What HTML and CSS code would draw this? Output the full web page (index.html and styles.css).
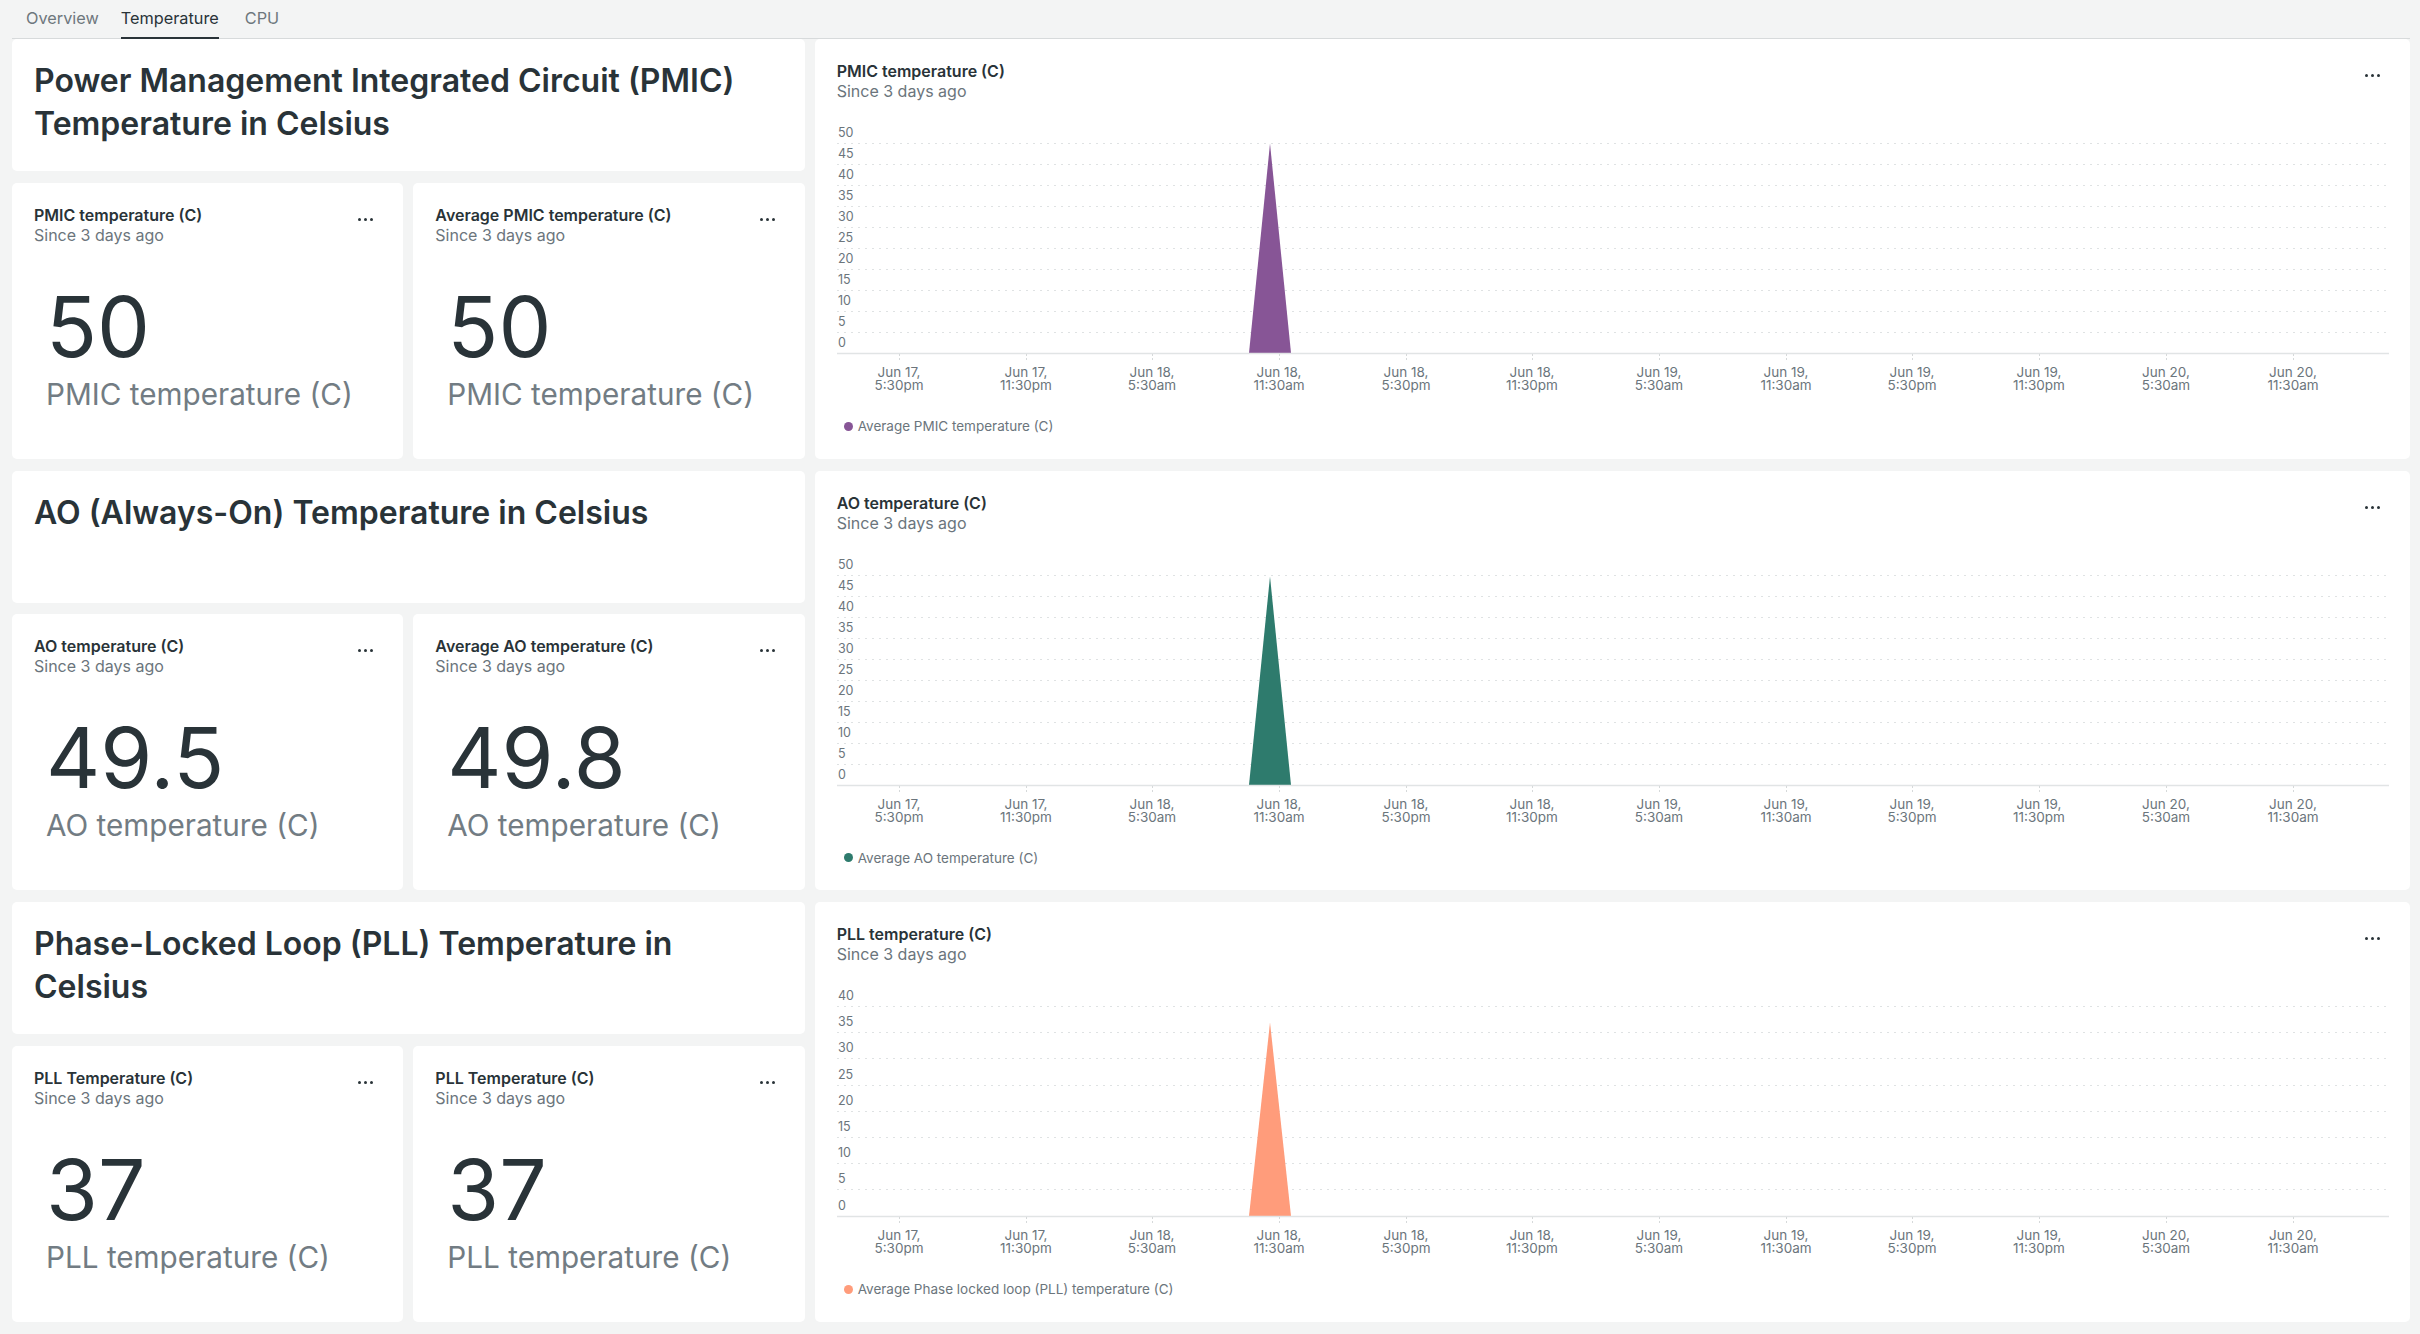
FILE: index.html
```html
<!DOCTYPE html>
<html lang="en">
<head>
<meta charset="utf-8">
<title>Temperature</title>
<link rel="stylesheet" href="styles.css">
</head>
<body>
<nav class="tabs">
  <span class="tab">Overview</span>
  <span class="tab active">Temperature</span>
  <span class="tab">CPU</span>
</nav>

<main class="board">
  <!-- Section 1: PMIC -->
  <section class="card title-card"><h2>Power Management Integrated Circuit (PMIC) Temperature in Celsius</h2></section>
  <section class="card chart">
    <div class="head">
      <div><div class="head-title">PMIC temperature (C)</div><div class="head-sub">Since 3 days ago</div></div>
      <svg class="more" width="15" height="3" viewBox="0 0 15 3"><circle cx="1.5" cy="1.5" r="1.5"/><circle cx="7.5" cy="1.5" r="1.5"/><circle cx="13.5" cy="1.5" r="1.5"/></svg>
    </div>
    <svg class="plot" width="1552" height="285" viewBox="0 0 1552 285">
      <g class="grid">
        <line x1="0" x2="1552" y1="28.5" y2="28.5"/><line x1="0" x2="1552" y1="49.5" y2="49.5"/><line x1="0" x2="1552" y1="70.5" y2="70.5"/><line x1="0" x2="1552" y1="91.5" y2="91.5"/><line x1="0" x2="1552" y1="112.5" y2="112.5"/><line x1="0" x2="1552" y1="133.5" y2="133.5"/><line x1="0" x2="1552" y1="154.5" y2="154.5"/><line x1="0" x2="1552" y1="175.5" y2="175.5"/><line x1="0" x2="1552" y1="196.5" y2="196.5"/><line x1="0" x2="1552" y1="217.5" y2="217.5"/>
      </g>
      <polygon class="area purple" points="412,238 433,28.5 454,238"/>
      <line class="axis" x1="0" x2="1552" y1="238.5" y2="238.5"/>
      <g class="ticks">
        <line x1="62.5" x2="62.5" y1="239" y2="247"/><line x1="189.5" x2="189.5" y1="239" y2="247"/><line x1="315.5" x2="315.5" y1="239" y2="247"/><line x1="442.5" x2="442.5" y1="239" y2="247"/><line x1="569.5" x2="569.5" y1="239" y2="247"/><line x1="695.5" x2="695.5" y1="239" y2="247"/><line x1="822.5" x2="822.5" y1="239" y2="247"/><line x1="949.5" x2="949.5" y1="239" y2="247"/><line x1="1075.5" x2="1075.5" y1="239" y2="247"/><line x1="1202.5" x2="1202.5" y1="239" y2="247"/><line x1="1329.5" x2="1329.5" y1="239" y2="247"/><line x1="1456.5" x2="1456.5" y1="239" y2="247"/>
      </g>
      <g class="ylab">
        <text x="1" y="22">50</text><text x="1" y="43">45</text><text x="1" y="64">40</text><text x="1" y="85">35</text><text x="1" y="106">30</text><text x="1" y="127">25</text><text x="1" y="148">20</text><text x="1" y="169">15</text><text x="1" y="190">10</text><text x="1" y="211">5</text><text x="1" y="232">0</text>
      </g>
      <g class="xlab">
        <text><tspan x="62" y="262">Jun 17,</tspan><tspan x="62" y="275">5:30pm</tspan></text>
        <text><tspan x="189" y="262">Jun 17,</tspan><tspan x="189" y="275">11:30pm</tspan></text>
        <text><tspan x="315" y="262">Jun 18,</tspan><tspan x="315" y="275">5:30am</tspan></text>
        <text><tspan x="442" y="262">Jun 18,</tspan><tspan x="442" y="275">11:30am</tspan></text>
        <text><tspan x="569" y="262">Jun 18,</tspan><tspan x="569" y="275">5:30pm</tspan></text>
        <text><tspan x="695" y="262">Jun 18,</tspan><tspan x="695" y="275">11:30pm</tspan></text>
        <text><tspan x="822" y="262">Jun 19,</tspan><tspan x="822" y="275">5:30am</tspan></text>
        <text><tspan x="949" y="262">Jun 19,</tspan><tspan x="949" y="275">11:30am</tspan></text>
        <text><tspan x="1075" y="262">Jun 19,</tspan><tspan x="1075" y="275">5:30pm</tspan></text>
        <text><tspan x="1202" y="262">Jun 19,</tspan><tspan x="1202" y="275">11:30pm</tspan></text>
        <text><tspan x="1329" y="262">Jun 20,</tspan><tspan x="1329" y="275">5:30am</tspan></text>
        <text><tspan x="1456" y="262">Jun 20,</tspan><tspan x="1456" y="275">11:30am</tspan></text>
      </g>
    </svg>
    <div class="legend"><span class="dot purple-bg"></span>Average PMIC temperature (C)</div>
  </section>
  <section class="card billboard">
    <div class="head">
      <div><div class="head-title">PMIC temperature (C)</div><div class="head-sub">Since 3 days ago</div></div>
      <svg class="more" width="15" height="3" viewBox="0 0 15 3"><circle cx="1.5" cy="1.5" r="1.5"/><circle cx="7.5" cy="1.5" r="1.5"/><circle cx="13.5" cy="1.5" r="1.5"/></svg>
    </div>
    <div class="value"><div class="num">50</div><div class="unit">PMIC temperature (C)</div></div>
  </section>
  <section class="card billboard">
    <div class="head">
      <div><div class="head-title">Average PMIC temperature (C)</div><div class="head-sub">Since 3 days ago</div></div>
      <svg class="more" width="15" height="3" viewBox="0 0 15 3"><circle cx="1.5" cy="1.5" r="1.5"/><circle cx="7.5" cy="1.5" r="1.5"/><circle cx="13.5" cy="1.5" r="1.5"/></svg>
    </div>
    <div class="value"><div class="num">50</div><div class="unit">PMIC temperature (C)</div></div>
  </section>

  <!-- Section 2: AO -->
  <section class="card title-card"><h2>AO (Always-On) Temperature in Celsius</h2></section>
  <section class="card chart">
    <div class="head">
      <div><div class="head-title">AO temperature (C)</div><div class="head-sub">Since 3 days ago</div></div>
      <svg class="more" width="15" height="3" viewBox="0 0 15 3"><circle cx="1.5" cy="1.5" r="1.5"/><circle cx="7.5" cy="1.5" r="1.5"/><circle cx="13.5" cy="1.5" r="1.5"/></svg>
    </div>
    <svg class="plot" width="1552" height="285" viewBox="0 0 1552 285">
      <g class="grid">
        <line x1="0" x2="1552" y1="28.5" y2="28.5"/><line x1="0" x2="1552" y1="49.5" y2="49.5"/><line x1="0" x2="1552" y1="70.5" y2="70.5"/><line x1="0" x2="1552" y1="91.5" y2="91.5"/><line x1="0" x2="1552" y1="112.5" y2="112.5"/><line x1="0" x2="1552" y1="133.5" y2="133.5"/><line x1="0" x2="1552" y1="154.5" y2="154.5"/><line x1="0" x2="1552" y1="175.5" y2="175.5"/><line x1="0" x2="1552" y1="196.5" y2="196.5"/><line x1="0" x2="1552" y1="217.5" y2="217.5"/>
      </g>
      <polygon class="area teal" points="412,238 433,29.5 454,238"/>
      <line class="axis" x1="0" x2="1552" y1="238.5" y2="238.5"/>
      <g class="ticks">
        <line x1="62.5" x2="62.5" y1="239" y2="247"/><line x1="189.5" x2="189.5" y1="239" y2="247"/><line x1="315.5" x2="315.5" y1="239" y2="247"/><line x1="442.5" x2="442.5" y1="239" y2="247"/><line x1="569.5" x2="569.5" y1="239" y2="247"/><line x1="695.5" x2="695.5" y1="239" y2="247"/><line x1="822.5" x2="822.5" y1="239" y2="247"/><line x1="949.5" x2="949.5" y1="239" y2="247"/><line x1="1075.5" x2="1075.5" y1="239" y2="247"/><line x1="1202.5" x2="1202.5" y1="239" y2="247"/><line x1="1329.5" x2="1329.5" y1="239" y2="247"/><line x1="1456.5" x2="1456.5" y1="239" y2="247"/>
      </g>
      <g class="ylab">
        <text x="1" y="22">50</text><text x="1" y="43">45</text><text x="1" y="64">40</text><text x="1" y="85">35</text><text x="1" y="106">30</text><text x="1" y="127">25</text><text x="1" y="148">20</text><text x="1" y="169">15</text><text x="1" y="190">10</text><text x="1" y="211">5</text><text x="1" y="232">0</text>
      </g>
      <g class="xlab">
        <text><tspan x="62" y="262">Jun 17,</tspan><tspan x="62" y="275">5:30pm</tspan></text>
        <text><tspan x="189" y="262">Jun 17,</tspan><tspan x="189" y="275">11:30pm</tspan></text>
        <text><tspan x="315" y="262">Jun 18,</tspan><tspan x="315" y="275">5:30am</tspan></text>
        <text><tspan x="442" y="262">Jun 18,</tspan><tspan x="442" y="275">11:30am</tspan></text>
        <text><tspan x="569" y="262">Jun 18,</tspan><tspan x="569" y="275">5:30pm</tspan></text>
        <text><tspan x="695" y="262">Jun 18,</tspan><tspan x="695" y="275">11:30pm</tspan></text>
        <text><tspan x="822" y="262">Jun 19,</tspan><tspan x="822" y="275">5:30am</tspan></text>
        <text><tspan x="949" y="262">Jun 19,</tspan><tspan x="949" y="275">11:30am</tspan></text>
        <text><tspan x="1075" y="262">Jun 19,</tspan><tspan x="1075" y="275">5:30pm</tspan></text>
        <text><tspan x="1202" y="262">Jun 19,</tspan><tspan x="1202" y="275">11:30pm</tspan></text>
        <text><tspan x="1329" y="262">Jun 20,</tspan><tspan x="1329" y="275">5:30am</tspan></text>
        <text><tspan x="1456" y="262">Jun 20,</tspan><tspan x="1456" y="275">11:30am</tspan></text>
      </g>
    </svg>
    <div class="legend"><span class="dot teal-bg"></span>Average AO temperature (C)</div>
  </section>
  <section class="card billboard">
    <div class="head">
      <div><div class="head-title">AO temperature (C)</div><div class="head-sub">Since 3 days ago</div></div>
      <svg class="more" width="15" height="3" viewBox="0 0 15 3"><circle cx="1.5" cy="1.5" r="1.5"/><circle cx="7.5" cy="1.5" r="1.5"/><circle cx="13.5" cy="1.5" r="1.5"/></svg>
    </div>
    <div class="value"><div class="num">49.5</div><div class="unit">AO temperature (C)</div></div>
  </section>
  <section class="card billboard">
    <div class="head">
      <div><div class="head-title">Average AO temperature (C)</div><div class="head-sub">Since 3 days ago</div></div>
      <svg class="more" width="15" height="3" viewBox="0 0 15 3"><circle cx="1.5" cy="1.5" r="1.5"/><circle cx="7.5" cy="1.5" r="1.5"/><circle cx="13.5" cy="1.5" r="1.5"/></svg>
    </div>
    <div class="value"><div class="num">49.8</div><div class="unit">AO temperature (C)</div></div>
  </section>

  <!-- Section 3: PLL -->
  <section class="card title-card"><h2>Phase-Locked Loop (PLL) Temperature in Celsius</h2></section>
  <section class="card chart">
    <div class="head">
      <div><div class="head-title">PLL temperature (C)</div><div class="head-sub">Since 3 days ago</div></div>
      <svg class="more" width="15" height="3" viewBox="0 0 15 3"><circle cx="1.5" cy="1.5" r="1.5"/><circle cx="7.5" cy="1.5" r="1.5"/><circle cx="13.5" cy="1.5" r="1.5"/></svg>
    </div>
    <svg class="plot" width="1552" height="285" viewBox="0 0 1552 285">
      <g class="grid">
        <line x1="0" x2="1552" y1="28.5" y2="28.5"/><line x1="0" x2="1552" y1="54.5" y2="54.5"/><line x1="0" x2="1552" y1="80.5" y2="80.5"/><line x1="0" x2="1552" y1="107.5" y2="107.5"/><line x1="0" x2="1552" y1="133.5" y2="133.5"/><line x1="0" x2="1552" y1="159.5" y2="159.5"/><line x1="0" x2="1552" y1="185.5" y2="185.5"/><line x1="0" x2="1552" y1="211.5" y2="211.5"/>
      </g>
      <polygon class="area salmon" points="412,238 433,44.5 454,238"/>
      <line class="axis" x1="0" x2="1552" y1="238.5" y2="238.5"/>
      <g class="ticks">
        <line x1="62.5" x2="62.5" y1="239" y2="247"/><line x1="189.5" x2="189.5" y1="239" y2="247"/><line x1="315.5" x2="315.5" y1="239" y2="247"/><line x1="442.5" x2="442.5" y1="239" y2="247"/><line x1="569.5" x2="569.5" y1="239" y2="247"/><line x1="695.5" x2="695.5" y1="239" y2="247"/><line x1="822.5" x2="822.5" y1="239" y2="247"/><line x1="949.5" x2="949.5" y1="239" y2="247"/><line x1="1075.5" x2="1075.5" y1="239" y2="247"/><line x1="1202.5" x2="1202.5" y1="239" y2="247"/><line x1="1329.5" x2="1329.5" y1="239" y2="247"/><line x1="1456.5" x2="1456.5" y1="239" y2="247"/>
      </g>
      <g class="ylab">
        <text x="1" y="22">40</text><text x="1" y="48">35</text><text x="1" y="74">30</text><text x="1" y="101">25</text><text x="1" y="127">20</text><text x="1" y="153">15</text><text x="1" y="179">10</text><text x="1" y="205">5</text><text x="1" y="232">0</text>
      </g>
      <g class="xlab">
        <text><tspan x="62" y="262">Jun 17,</tspan><tspan x="62" y="275">5:30pm</tspan></text>
        <text><tspan x="189" y="262">Jun 17,</tspan><tspan x="189" y="275">11:30pm</tspan></text>
        <text><tspan x="315" y="262">Jun 18,</tspan><tspan x="315" y="275">5:30am</tspan></text>
        <text><tspan x="442" y="262">Jun 18,</tspan><tspan x="442" y="275">11:30am</tspan></text>
        <text><tspan x="569" y="262">Jun 18,</tspan><tspan x="569" y="275">5:30pm</tspan></text>
        <text><tspan x="695" y="262">Jun 18,</tspan><tspan x="695" y="275">11:30pm</tspan></text>
        <text><tspan x="822" y="262">Jun 19,</tspan><tspan x="822" y="275">5:30am</tspan></text>
        <text><tspan x="949" y="262">Jun 19,</tspan><tspan x="949" y="275">11:30am</tspan></text>
        <text><tspan x="1075" y="262">Jun 19,</tspan><tspan x="1075" y="275">5:30pm</tspan></text>
        <text><tspan x="1202" y="262">Jun 19,</tspan><tspan x="1202" y="275">11:30pm</tspan></text>
        <text><tspan x="1329" y="262">Jun 20,</tspan><tspan x="1329" y="275">5:30am</tspan></text>
        <text><tspan x="1456" y="262">Jun 20,</tspan><tspan x="1456" y="275">11:30am</tspan></text>
      </g>
    </svg>
    <div class="legend"><span class="dot salmon-bg"></span>Average Phase locked loop (PLL) temperature (C)</div>
  </section>
  <section class="card billboard">
    <div class="head">
      <div><div class="head-title">PLL Temperature (C)</div><div class="head-sub">Since 3 days ago</div></div>
      <svg class="more" width="15" height="3" viewBox="0 0 15 3"><circle cx="1.5" cy="1.5" r="1.5"/><circle cx="7.5" cy="1.5" r="1.5"/><circle cx="13.5" cy="1.5" r="1.5"/></svg>
    </div>
    <div class="value"><div class="num">37</div><div class="unit">PLL temperature (C)</div></div>
  </section>
  <section class="card billboard">
    <div class="head">
      <div><div class="head-title">PLL Temperature (C)</div><div class="head-sub">Since 3 days ago</div></div>
      <svg class="more" width="15" height="3" viewBox="0 0 15 3"><circle cx="1.5" cy="1.5" r="1.5"/><circle cx="7.5" cy="1.5" r="1.5"/><circle cx="13.5" cy="1.5" r="1.5"/></svg>
    </div>
    <div class="value"><div class="num">37</div><div class="unit">PLL temperature (C)</div></div>
  </section>
</main>
</body>
</html>
```

FILE: styles.css
```css
* { box-sizing: border-box; }
html, body { margin: 0; padding: 0; }
body {
  background: #f3f4f4;
  font-family: Inter, "Noto Sans", "Liberation Sans", sans-serif;
  color: #293338;
  width: 2420px;
  height: 1334px;
  overflow: hidden;
}

/* Tabs */
.tabs {
  display: flex;
  margin: 0 10px 0 12px;
  padding-left: 14px;
  height: 39px;
  border-bottom: 1px solid #d7dadb;
}
.tab {
  font-size: 16.3px;
  line-height: 20px;
  padding-top: 8px;
  height: 39px;
  color: #6e777d;
}
.tab + .tab { margin-left: 22px; }
.tab.active + .tab { margin-left: 26px; }
.tab.active {
  color: #293338;
  border-bottom: 2px solid #293338;
}

/* Board grid */
.board {
  display: grid;
  grid-template-columns: repeat(12, 1fr);
  grid-template-rows: 132px 276px 132px 276px 132px 276px;
  column-gap: 10px;
  row-gap: 11.75px;
  margin: 0 10px 0 12px;
}
.card {
  background: #fff;
  border-radius: 5px;
  min-width: 0;
}
.title-card {
  grid-column: span 4;
  padding: 20px 22px;
}
.title-card h2 {
  margin: 0;
  font-size: 32px;
  line-height: 43px;
  font-weight: 600;
  color: #293338;
}
.billboard {
  grid-column: span 2;
  padding: 22px;
}
.chart {
  grid-column: span 8;
  grid-row: span 2;
  padding: 22px;
}

/* Widget header */
.head {
  display: flex;
  justify-content: space-between;
  align-items: flex-start;
}
.head-title {
  font-size: 16px;
  line-height: 20px;
  font-weight: 600;
  color: #293338;
}
.head-sub {
  font-size: 16px;
  line-height: 20px;
  color: #6b757c;
}
.more {
  display: block;
  margin: 13px 8px 0 0;
  fill: #293338;
}

/* Billboard value */
.value {
  margin: 40px 0 0 12px;
}
.num {
  font-size: 84px;
  line-height: 84px;
  font-weight: 400;
  color: #293338;
}
.unit {
  margin-top: 7px;
  font-size: 29.7px;
  line-height: 36px;
  color: #727c83;
}

/* Chart */
.plot {
  display: block;
  margin-top: 14px;
  overflow: visible;
}
.grid line {
  stroke: #dfe2e3;
  stroke-width: 1;
  stroke-dasharray: 2 5;
}
.axis {
  stroke: #e1e4e5;
  stroke-width: 1.5;
}
.ticks line {
  stroke: #d6d9da;
  stroke-width: 1;
  stroke-dasharray: 2 2;
}
.ylab text {
  font-family: Inter, "Noto Sans", sans-serif;
  font-size: 12.5px;
  fill: #6b757c;
}
.xlab text {
  font-family: Inter, "Noto Sans", sans-serif;
  font-size: 13.5px;
  fill: #6b757c;
  text-anchor: middle;
}
.area.purple { fill: #875596; }
.area.teal { fill: #2e7b6d; }
.area.salmon { fill: #ff9c7b; }

.legend {
  margin-top: 17px;
  padding-left: 7px;
  display: flex;
  align-items: center;
  gap: 5px;
  font-size: 13.5px;
  line-height: 18px;
  color: #6b757c;
}
.dot {
  width: 9px;
  height: 9px;
  border-radius: 50%;
}
.purple-bg { background: #875596; }
.teal-bg { background: #2e7b6d; }
.salmon-bg { background: #ff9c7b; }
```
